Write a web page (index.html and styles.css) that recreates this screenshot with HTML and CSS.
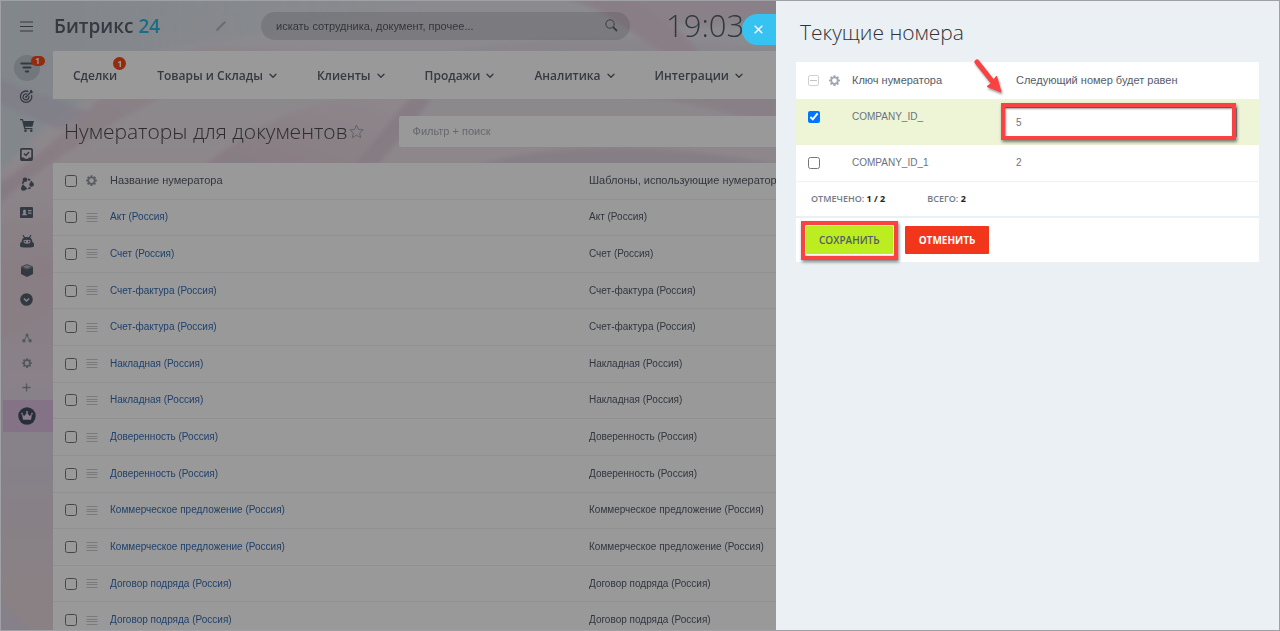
FILE: index.html
```html
<!DOCTYPE html>
<html lang="ru">
<head>
<meta charset="utf-8">
<title>Нумераторы для документов</title>
<link rel="stylesheet" href="styles.css">
</head>
<body>
<svg class="defs" aria-hidden="true">
  <symbol id="gear" viewBox="0 0 12 12"><path fill-rule="evenodd" d="M5 .2h2l.3 1.600 1 .4 1.300-.9 1.300 1.300-.9 1.400.4 1 1.600.3v1.600l-1.600.3-.4 1 .9 1.400-1.300 1.300-1.300-.9-1 .4L7 11.900H5l-.3-1.500-1-.4-1.300.9-1.300-1.300.9-1.400-.4-1L0 6.900V5.300L1.600 5l.4-1-.9-1.400 1.300-1.300 1.300.9 1-.4zM6 3.500a2.600 2.600 0 1 0 0 5.200 2.600 2.600 0 0 0 0-5.200z"/></symbol>
  <symbol id="chevron" viewBox="0 0 8 6"><path d="M1 1.200 4 4.200 7 1.200" fill="none" stroke="currentColor" stroke-width="1.400" stroke-linecap="round"/></symbol>
  <symbol id="drag" viewBox="0 0 12 9"><path d="M.5 .5h11M.5 3.500h11M.5 5.500h11M.5 8.500h11" stroke="currentColor" stroke-width="1"/></symbol>
</svg>

<svg class="backdrop" viewBox="0 0 1280 631" preserveAspectRatio="none" aria-hidden="true">
  <defs>
    <linearGradient id="sky" x1="0" y1="0" x2="0" y2="1">
      <stop offset="0" stop-color="#e8e8ef"/><stop offset=".25" stop-color="#ebe2e9"/><stop offset=".42" stop-color="#e4d3dd"/><stop offset=".6" stop-color="#e6d8e4"/><stop offset=".75" stop-color="#e0d8e4"/><stop offset="1" stop-color="#e6d8da"/>
    </linearGradient>
    <linearGradient id="mist" x1="0" y1="0" x2="1" y2="0"><stop offset="0" stop-color="#d8e1e9"/><stop offset="1" stop-color="#d8e1e9" stop-opacity="0"/></linearGradient>
    <linearGradient id="rose" x1="0" y1="1" x2="1" y2="0"><stop offset="0" stop-color="#dcc6d3"/><stop offset="1" stop-color="#ece0e8"/></linearGradient>
    <filter id="soft"><feGaussianBlur stdDeviation="2"/></filter>
  </defs>
  <rect width="1280" height="631" fill="url(#sky)"/>
  <g filter="url(#soft)">
    <path d="M-9-9H500L160 50 53 120-9 180z" fill="url(#mist)"/>
    <path d="M-9 76 90 112 60 130-9 100z" fill="#d5d0e2" opacity=".7"/>
    <path d="M-9 190Q60 140 100 98L200 46 330 51 160 98Q60 150-9 210z" fill="url(#rose)" opacity=".8"/>
    <path d="M205 165Q270 110 350 98H420L360 165z" fill="url(#rose)" opacity=".7"/>
    <path d="M560-4Q660 40 790 20V-4z" fill="#e2d1dc" opacity=".7"/>
    <path d="M440 55Q560 25 780 51z" fill="#ddd2e2" opacity=".4"/>
    <path d="M575-4Q600 10 665 55H700Q670 10 620-4z" fill="#e6d3df"/>
    <path d="M410 98H432Q400 140 378 165H355z" fill="#dbc8d7" opacity=".7"/>
    <path d="M600 94Q690 96 776 130V94z" fill="#dfd0dc" opacity=".7"/>
    <path d="M475 165Q600 130 780 165z" fill="#dbccd8" opacity=".7"/>
    <path d="M-9 280 60 252V300Q20 340-9 340z" fill="#e3d0d8" opacity=".6"/>
    <path d="M-9 590 40 640H-9z" fill="#ddd4e8" opacity=".8"/>
  </g>
</svg>

<div class="app">
  <aside class="side">
    <button class="burger" aria-label="Меню"><svg width="13" height="11" viewBox="0 0 13 11"><path d="M0 1h13M0 5.500h13M0 10h13" stroke="currentColor" stroke-width="1"/></svg></button>
    <nav class="side-nav">
      <a class="side-item" href="#" aria-label="CRM"><span class="round"><svg width="14" height="11" viewBox="0 0 14 11"><path d="M1.300 1.500h11.400M3.500 5.500h7M5.800 9.500h2.400" stroke="currentColor" stroke-width="2" stroke-linecap="round"/></svg><span class="pill">1</span></span></a>
      <a class="side-item" href="#" aria-label="Маркетинг"><svg width="15" height="15" viewBox="0 0 15 15" fill="none" stroke="currentColor" stroke-width="1.300"><path d="M9.500 2.600A5.700 5.700 0 1 0 12.500 6"/><path d="M8.200 5.200A3 3 0 1 0 9.900 7.200"/><circle cx="7" cy="8" r="1" fill="currentColor" stroke="none"/><path d="M7 8 12.500 2.500"/><path d="M11 1.500 13 .8 13 2.500 14.500 2.500 13 4.200 11 4z" fill="currentColor" stroke="none"/></svg></a>
      <a class="side-item" href="#" aria-label="Магазин"><svg width="14" height="13" viewBox="0 0 14 13" fill="currentColor"><path d="M0 0h2.800l.7 2H14l-1.600 5.800H5L5.400 9h7v1.200H4.300L2 1.200H0z"/><circle cx="5.500" cy="11.700" r="1.300"/><circle cx="11.300" cy="11.700" r="1.300"/></svg></a>
      <a class="side-item" href="#" aria-label="Задачи"><svg width="13" height="13" viewBox="0 0 13 13" fill="none" stroke="currentColor"><rect x=".9" y=".9" width="11.200" height="11.200" rx="1" stroke-width="1.700"/><path d="M4 5.500 6 7.500 9 4" stroke-width="1.500"/><path d="M1 9.500h3l1 1.300h3l1-1.300h3V12H1z" fill="currentColor" stroke="none"/></svg></a>
      <a class="side-item" href="#" aria-label="Автоматизация"><svg width="14" height="14" viewBox="0 0 14 14"><circle cx="7.300" cy="7" r="4.600" fill="none" stroke="currentColor" stroke-width="1.700" stroke-dasharray="2.500 1.100"/><g fill="currentColor"><circle cx="5" cy="2.700" r="2.300"/><circle cx="11.600" cy="7.500" r="2.300"/><circle cx="3.500" cy="11.300" r="2.500"/></g></svg></a>
      <a class="side-item" href="#" aria-label="Контакты"><svg width="13" height="11" viewBox="0 0 13 11"><path fill="currentColor" fill-rule="evenodd" d="M1 0h11q1 0 1 1v9q0 1-1 1H1q-1 0-1-1V1q0-1 1-1zM2 8.300h5Q7 6.800 5.400 6.300 6 5.500 6 4.200 6 2.500 4.500 2.500T3 4.200Q3 5.500 3.600 6.300 2 6.800 2 8.300zM8 3v1.200h3.500V3zM8 5.500v1.200h3.500V5.500z"/></svg></a>
      <a class="side-item" href="#" aria-label="Роботы"><svg width="14" height="13" viewBox="0 0 14 13"><path d="M3.300 .6 4.600 2.700M10.700 .6 9.400 2.700" stroke="currentColor" stroke-width="1.200" stroke-linecap="round"/><path fill="currentColor" fill-rule="evenodd" d="M1.500 7.300Q1.800 2 7 2t5.500 5.300q1.500.3 1.500 1.700v2.300Q14 12.500 7 12.500T0 11.300V9q0-1.400 1.500-1.700zM3.500 5.200Q3 8.700 7 8.700T10.500 5.200Q7 4.200 3.500 5.200z"/><circle cx="5.300" cy="6.600" r=".8" fill="currentColor"/><circle cx="8.700" cy="6.600" r=".8" fill="currentColor"/></svg></a>
      <a class="side-item" href="#" aria-label="Склад"><svg width="12" height="13" viewBox="0 0 12 13"><path fill="currentColor" d="M0 3 6 5.500 12 3V10L6 13 0 10z"/><path d="M.6 2.700 6 .6 11.400 2.700 6 5z" fill="#b9b3be" stroke="currentColor" stroke-width=".8"/></svg></a>
      <a class="side-item" href="#" aria-label="Ещё"><svg width="13" height="13" viewBox="0 0 13 13"><circle cx="6.500" cy="6.500" r="6.300" fill="currentColor"/><path d="M3.900 5.500 6.500 8 9.100 5.500" fill="none" stroke="#eadde5" stroke-width="1.500"/></svg></a>
    </nav>
    <div class="side-tools">
      <button class="tool" aria-label="Структура"><svg width="10" height="10" viewBox="0 0 10 10"><path d="M5 2 2 8M5 2 8 8" stroke="currentColor"/><g fill="currentColor"><circle cx="5" cy="2" r="1.500"/><circle cx="1.900" cy="7.800" r="1.700"/><circle cx="8.100" cy="7.800" r="1.700"/></g></svg></button>
      <button class="tool" aria-label="Настройки"><svg width="10" height="10" fill="currentColor"><use href="#gear"/></svg></button>
      <button class="tool" aria-label="Добавить"><svg width="9" height="9" viewBox="0 0 9 9"><path d="M4.500 .5v8M.5 4.500h8" stroke="currentColor" stroke-width="1.300"/></svg></button>
    </div>
    <a class="crown" href="#" aria-label="Тариф"><svg width="18" height="18" viewBox="0 0 18 18"><circle cx="9" cy="9" r="8.700" fill="#434e60"/><path d="M4 7 6.300 9 9 5.500 11.700 9 14 7 13 12.800H5z" fill="#e6cfe8"/><g fill="#e6cfe8"><circle cx="4" cy="6.600" r=".9"/><circle cx="9" cy="5" r="1"/><circle cx="14" cy="6.600" r=".9"/></g></svg></a>
  </aside>

  <main class="main">
    <header class="top">
      <a class="logo" href="#">Битрикс <span>24</span></a>
      <svg class="pencil" width="11" height="11" viewBox="0 0 11 11"><path d="M1.500 9.500 9.300 1.700" stroke="currentColor" stroke-width="2.200"/><path d="M0 11 .8 8.300 2.700 10.200z" fill="currentColor"/></svg>
      <label class="search"><input type="text" aria-label="Поиск" placeholder="искать сотрудника, документ, прочее..."><svg width="13" height="13" viewBox="0 0 13 13"><circle cx="5" cy="5" r="4.200" fill="none" stroke="currentColor" stroke-width="1"/><path d="M8 8 12 12" stroke="currentColor" stroke-width="1.800"/></svg></label>
      <time class="clock">19:03</time>
    </header>
    <nav class="menu">
      <a href="#">Сделки<span class="dot">1</span></a>
      <a href="#">Товары и Склады<svg width="8" height="6"><use href="#chevron"/></svg></a>
      <a href="#">Клиенты<svg width="8" height="6"><use href="#chevron"/></svg></a>
      <a href="#">Продажи<svg width="8" height="6"><use href="#chevron"/></svg></a>
      <a href="#">Аналитика<svg width="8" height="6"><use href="#chevron"/></svg></a>
      <a href="#">Интеграции<svg width="8" height="6"><use href="#chevron"/></svg></a>
    </nav>
    <div class="heading">
      <h1>Нумераторы для документов</h1>
      <svg width="15" height="15" viewBox="0 0 15 15"><path d="M7.500 1 9.400 5.500 14.200 5.900 10.600 9 11.700 13.800 7.500 11.200 3.300 13.800 4.400 9 .8 5.900 5.600 5.500z" fill="none" stroke="currentColor"/></svg>
      <input class="filter" type="text" aria-label="Фильтр" placeholder="Фильтр + поиск">
    </div>
    <table class="list">
      <thead><tr><th class="c-check"><input type="checkbox" aria-label="Выбрать все"></th><th class="c-icon"><svg width="11" height="11" fill="currentColor"><use href="#gear"/></svg></th><th class="c-name">Название нумератора</th><th>Шаблоны, использующие нумератор</th></tr></thead>
      <tbody>
        <tr><td><input type="checkbox" aria-label="Акт"></td><td class="c-icon"><svg width="12" height="9"><use href="#drag"/></svg></td><td><a href="#">Акт (Россия)</a></td><td>Акт (Россия)</td></tr>
        <tr><td><input type="checkbox" aria-label="Счет"></td><td class="c-icon"><svg width="12" height="9"><use href="#drag"/></svg></td><td><a href="#">Счет (Россия)</a></td><td>Счет (Россия)</td></tr>
        <tr><td><input type="checkbox" aria-label="Счет-фактура"></td><td class="c-icon"><svg width="12" height="9"><use href="#drag"/></svg></td><td><a href="#">Счет-фактура (Россия)</a></td><td>Счет-фактура (Россия)</td></tr>
        <tr><td><input type="checkbox" aria-label="Счет-фактура"></td><td class="c-icon"><svg width="12" height="9"><use href="#drag"/></svg></td><td><a href="#">Счет-фактура (Россия)</a></td><td>Счет-фактура (Россия)</td></tr>
        <tr><td><input type="checkbox" aria-label="Накладная"></td><td class="c-icon"><svg width="12" height="9"><use href="#drag"/></svg></td><td><a href="#">Накладная (Россия)</a></td><td>Накладная (Россия)</td></tr>
        <tr><td><input type="checkbox" aria-label="Накладная"></td><td class="c-icon"><svg width="12" height="9"><use href="#drag"/></svg></td><td><a href="#">Накладная (Россия)</a></td><td>Накладная (Россия)</td></tr>
        <tr><td><input type="checkbox" aria-label="Доверенность"></td><td class="c-icon"><svg width="12" height="9"><use href="#drag"/></svg></td><td><a href="#">Доверенность (Россия)</a></td><td>Доверенность (Россия)</td></tr>
        <tr><td><input type="checkbox" aria-label="Доверенность"></td><td class="c-icon"><svg width="12" height="9"><use href="#drag"/></svg></td><td><a href="#">Доверенность (Россия)</a></td><td>Доверенность (Россия)</td></tr>
        <tr><td><input type="checkbox" aria-label="Коммерческое предложение"></td><td class="c-icon"><svg width="12" height="9"><use href="#drag"/></svg></td><td><a href="#">Коммерческое предложение (Россия)</a></td><td>Коммерческое предложение (Россия)</td></tr>
        <tr><td><input type="checkbox" aria-label="Коммерческое предложение"></td><td class="c-icon"><svg width="12" height="9"><use href="#drag"/></svg></td><td><a href="#">Коммерческое предложение (Россия)</a></td><td>Коммерческое предложение (Россия)</td></tr>
        <tr><td><input type="checkbox" aria-label="Договор подряда"></td><td class="c-icon"><svg width="12" height="9"><use href="#drag"/></svg></td><td><a href="#">Договор подряда (Россия)</a></td><td>Договор подряда (Россия)</td></tr>
        <tr><td><input type="checkbox" aria-label="Договор подряда"></td><td class="c-icon"><svg width="12" height="9"><use href="#drag"/></svg></td><td><a href="#">Договор подряда (Россия)</a></td><td>Договор подряда (Россия)</td></tr>
      </tbody>
    </table>
  </main>
</div>

<div class="shade"></div>

<section class="panel" aria-labelledby="panel-title">
  <button class="close" aria-label="Закрыть"><svg width="9" height="9" viewBox="0 0 9 9"><path d="M.7.7 8.300 8.300M8.300.7.7 8.300" stroke="currentColor" stroke-width="1.400"/></svg></button>
  <h2 id="panel-title">Текущие номера</h2>
  <form class="card">
    <table class="numbers">
      <thead><tr><th class="n-check"><span class="mixed"></span></th><th class="n-icon"><svg width="11" height="11" fill="currentColor"><use href="#gear"/></svg></th><th class="n-key">Ключ нумератора</th><th>Следующий номер будет равен</th></tr></thead>
      <tbody>
        <tr class="picked"><td><input type="checkbox" checked aria-label="COMPANY_ID_"></td><td></td><td>COMPANY_ID_</td><td class="edit"><div class="field"><input type="text" value="5" aria-label="Следующий номер"><span class="mark"></span><svg class="arrow" width="34" height="42" viewBox="0 0 34 42"><path d="M5 5 20 24" stroke="#fa4242" stroke-width="5" stroke-linecap="round"/><path d="M29 35 15 29.500 19.500 26 24.500 19z" fill="#fa4242" stroke="#fa4242" stroke-width="1"/></svg></div></td></tr>
        <tr><td><input type="checkbox" aria-label="COMPANY_ID_1"></td><td></td><td>COMPANY_ID_1</td><td>2</td></tr>
      </tbody>
    </table>
    <div class="totals"><span>Отмечено: <b>1 / 2</b></span><span>Всего: <b>2</b></span></div>
    <div class="actions">
      <div class="field"><button class="btn save" type="button">Сохранить</button><span class="mark"></span></div>
      <button class="btn cancel" type="button">Отменить</button>
    </div>
  </form>
</section>
<div class="frame"></div>
</body>
</html>
```
FILE: styles.css
```css
* { box-sizing: border-box; }
html, body { height: 100%; margin: 0; overflow: hidden; }
body { font: 11px/16px "Liberation Sans", Arial, sans-serif; color: #535c69; }
a { color: inherit; text-decoration: none; }
button { padding: 0; border: 0; background: none; color: inherit; font: inherit; }
svg { display: block; flex: none; }
h1, h2 { margin: 0; font-family: "Open Sans", sans-serif; font-weight: 300; }
.defs { position: absolute; width: 0; height: 0; }
.backdrop { position: fixed; inset: 0; width: 100%; height: 100%; }

.app { position: relative; display: flex; min-height: 100%; }
.side { flex: 0 0 53px; display: flex; flex-direction: column; color: #56606f; }
.burger { height: 53px; display: grid; place-items: center; }
.side-item { height: 29px; display: grid; place-items: center; }
.round { position: relative; display: grid; place-items: center; width: 26px; height: 26px; border-radius: 50%; background: rgba(83, 92, 105, .2); }
.pill { position: absolute; top: 1px; left: 17px; width: 14px; height: 10px; border-radius: 5px; background: #f54819; color: #fff; font: 700 8px/10px "Open Sans", sans-serif; text-align: center; }
.side-tools { margin-top: 11px; display: flex; flex-direction: column; color: #8b909c; }
.tool { height: 25px; display: grid; place-items: center; }
.crown { height: 32px; margin-left: 3px; padding-right: 3px; display: grid; place-items: center; background: #dcbfe0; }

.main { flex: 1; min-width: 0; display: flex; flex-direction: column; }
.top { height: 51px; display: flex; align-items: center; }
.logo { width: 163px; padding-left: 1px; font: 600 19px/28px "Open Sans", sans-serif; color: #5b616b; }
.logo span { color: #2fb4dd; }
.pencil { color: #b4b5bf; }
.search { display: flex; align-items: center; width: 369px; height: 28px; margin-left: 34px; padding: 0 12px 0 15px; border-radius: 14px; background: rgba(83, 85, 95, .18); color: #5f6670; }
.search input { flex: 1; border: 0; padding: 0; background: none; outline: 0; font: inherit; }
.search input::placeholder { color: #555a62; opacity: 1; }
.clock { margin-left: 36px; padding-bottom: 2px; font: 300 31px/40px "Open Sans", sans-serif; color: #535c69; }
.menu { height: 48px; display: flex; align-items: center; gap: 40px; padding: 2px 0 0 20px; background: #fff; font: 600 12px/16px "Open Sans", sans-serif; color: #5a626d; white-space: nowrap; }
.menu a { position: relative; display: flex; align-items: center; gap: 6px; }
.dot { position: absolute; top: -11px; right: -9px; width: 13px; height: 13px; border-radius: 50%; background: #f54819; color: #fff; font: 700 9px/13px "Open Sans", sans-serif; text-align: center; }
.heading { height: 64px; display: flex; align-items: center; padding-left: 11px; color: #a2a4aa; }
h1 { margin-right: 1px; font-size: 21px; line-height: 30px; color: #4a4a4a; white-space: nowrap; }
.filter { flex: 1; height: 31px; margin-left: 35px; padding: 0 14px; border: 0; border-radius: 2px; background: #fff; font: inherit; }
.filter::placeholder { color: #a8adb4; opacity: 1; }

table { width: 100%; border-collapse: collapse; table-layout: fixed; }
th, td { padding: 0; text-align: left; font-weight: 400; white-space: nowrap; }
td { font-size: 10px; }
th { padding-bottom: 2px; }
input[type="checkbox"] { display: block; width: 12px; height: 12px; margin: 0; }
.list { height: calc(100vh - 155px); background: #fff; }
.list th, .list td { height: 36px; border-bottom: 1px solid #eef2f4; }
.list tr > :first-child { padding-left: 12px; }
.list a { color: #376db5; }
.c-check { width: 33px; padding-bottom: 0; }
.c-name { width: 479px; }
th.c-icon { width: 24px; padding-bottom: 0; color: #949ba4; }
td.c-icon { color: #c8ccd1; }

.shade { position: fixed; inset: 0; background: rgba(0, 0, 0, .4); }
.panel { position: fixed; top: 0; right: 0; bottom: 0; width: 504px; padding: 17px 21px 20px 20px; background: #eaf0f4; }
.close { position: absolute; top: 14px; left: -34px; width: 34px; height: 31px; padding-left: 12px; border-radius: 16px 0 0 16px; background: #37c3f2; color: #fff; }
h2 { padding-left: 4px; font-size: 21px; line-height: 30px; color: #333; }
.card { margin-top: 15px; background: #fff; }
.numbers th { height: 37px; }
.numbers td { height: 36px; border-bottom: 1px solid #eef2f4; color: #6b727d; }
.numbers tr > :first-child { padding-left: 12px; }
.n-check { width: 33px; padding-bottom: 0; }
.n-icon { width: 23px; padding-bottom: 0; color: #a1a7b0; }
.n-key { width: 164px; }
.picked { background: #edf5d6; }
.numbers .picked td { height: 46px; padding-bottom: 10px; border-bottom: 0; }
.numbers .picked .edit { padding: 0 22px 0 0; }
.mixed { display: grid; place-items: center; width: 11px; height: 11px; border: 1px solid #d2d2d2; border-radius: 2px; }
.mixed::before { content: ""; width: 7px; height: 1px; background: #c4c4c4; }
.field { position: relative; }
.edit .field { margin-left: -12px; }
.edit input { display: block; width: 100%; height: 31px; padding: 0 11px; border: 1px solid #8f9399; border-radius: 2px; background: #fff; color: #6b727d; font: inherit; outline: 0; }
.mark { position: absolute; inset: -4px 1px -2px -3px; border: 4px solid #fa4242; box-shadow: 1px 2px 3px rgba(0, 0, 0, .5), inset 1px 2px 2px rgba(0, 0, 0, .4); pointer-events: none; }
.arrow { position: absolute; top: -50px; left: -32px; filter: drop-shadow(1px 2px 1px rgba(0, 0, 0, .4)); }
.totals { display: flex; gap: 42px; height: 36px; padding-left: 15px; align-items: center; border-bottom: 2px solid #eaf0f4; font: 600 9px/12px "Open Sans", sans-serif; color: #737a85; text-transform: uppercase; }
.totals b { color: #222; font-weight: 700; }
.actions { display: flex; gap: 12px; padding: 8px 10px; }
.btn { display: block; height: 28px; padding: 0 14px; border-radius: 1px; font: 600 10px/28px "Open Sans", sans-serif; text-transform: uppercase; }
.save { padding: 0 13px; background: #bbed21; color: #535c69; }
.cancel { background: #f1361b; color: #fff; font-weight: 700; }
.actions .mark { inset: -5px -5px -6px -5px; box-shadow: 1px 2px 3px rgba(0, 0, 0, .5), inset 0 0 2px rgba(0, 0, 0, .4); }
.frame { position: fixed; inset: 0; border: 1px solid #a0a1a6; pointer-events: none; }
```
